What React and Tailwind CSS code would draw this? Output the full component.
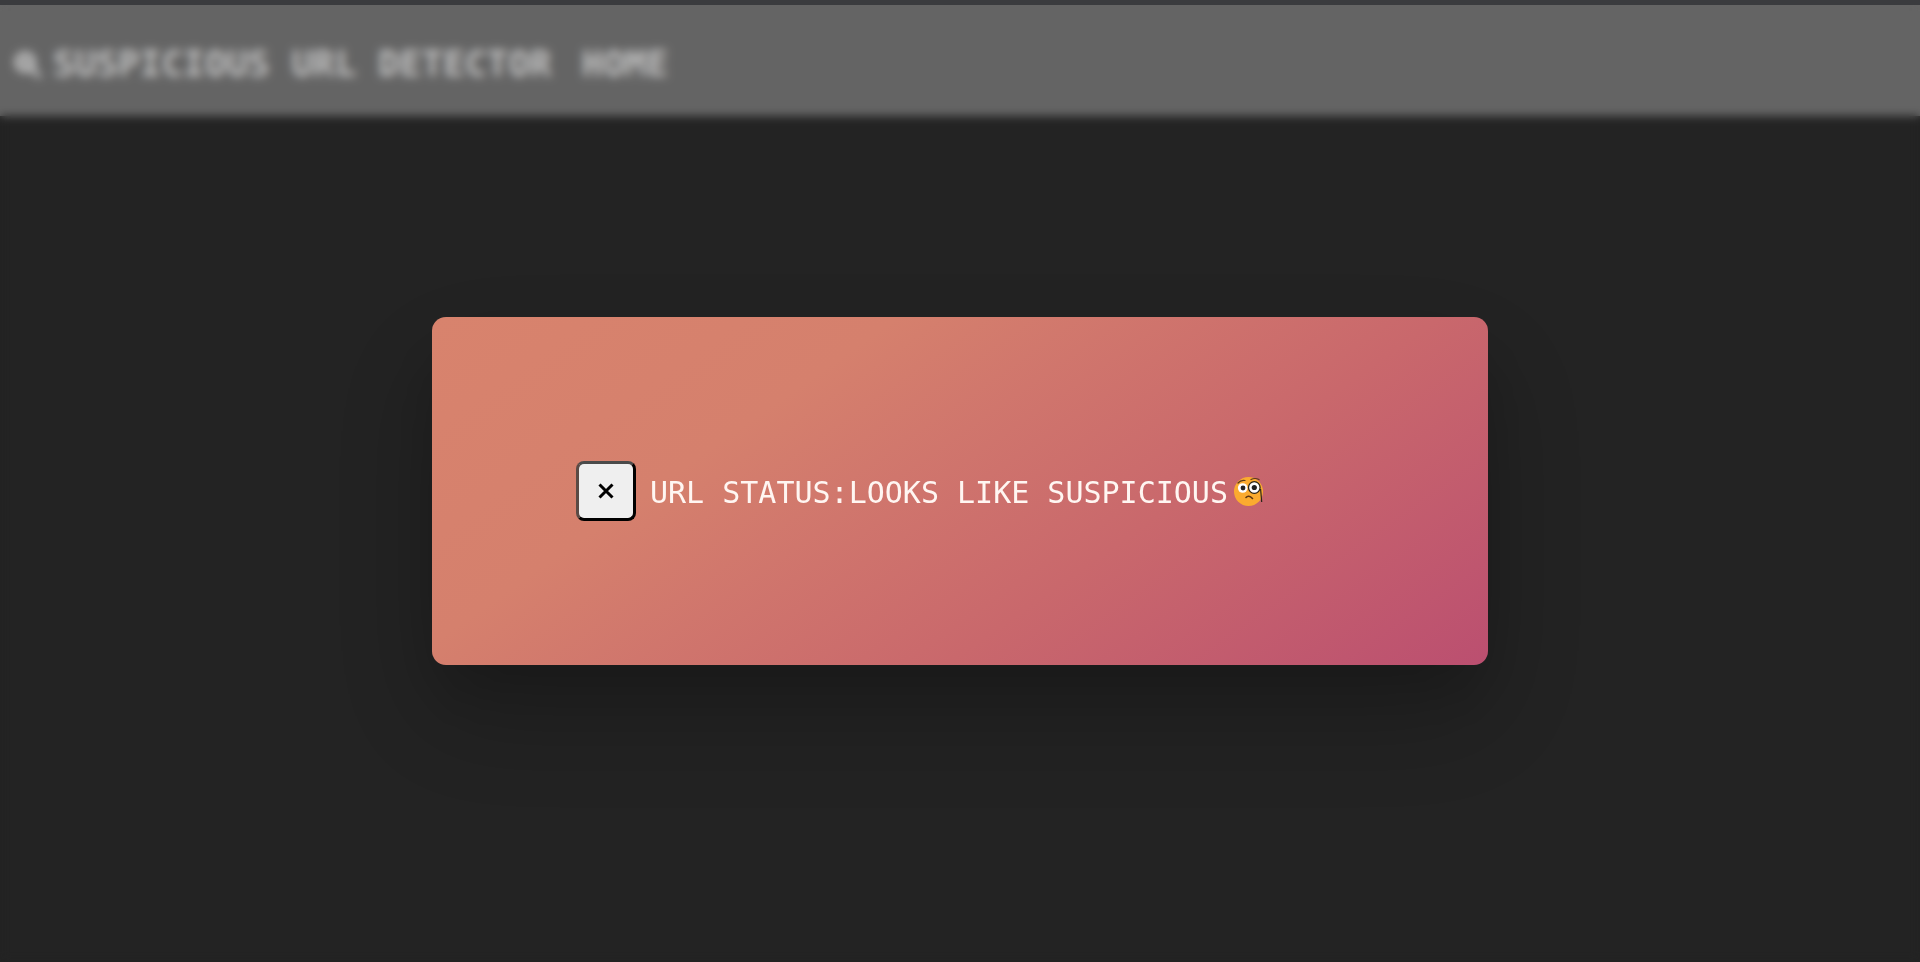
function MonocleFace() {
  return (
    <svg width="32" height="32" viewBox="0 0 32 32" className="mt-[2px] ml-[5px] shrink-0">
      <circle cx="15.5" cy="15.5" r="14.5" fill="#fbab2f" />
      <path d="M5 7 Q8 3.5 12 4.5" fill="none" stroke="#5b3a1a" strokeWidth="1.2" strokeLinecap="round" />
      <path d="M18 3.5 Q22 1.5 26 3.5" fill="none" stroke="#5b3a1a" strokeWidth="1.2" strokeLinecap="round" />
      <circle cx="9.7" cy="12" r="4.8" fill="#fff" />
      <circle cx="10" cy="12" r="2.4" fill="#222" />
      <circle cx="21.3" cy="11.5" r="5.8" fill="#fff" stroke="#2a2418" strokeWidth="1.3" />
      <circle cx="21.3" cy="11.5" r="2.6" fill="#222" />
      <path d="M27.6 13 L28.7 26" fill="none" stroke="#2a2418" strokeWidth="1.2" />
      <path d="M13 21.5 Q15.5 18.5 19.5 22.5" fill="none" stroke="#5b3410" strokeWidth="1.6" strokeLinecap="round" />
    </svg>
  )
}

export default function App() {
  return (
    <div className="relative h-[962px] overflow-hidden bg-[#2f2f2f] font-['DejaVu_Sans_Mono',monospace]">
      <nav className="flex h-[116px] items-center gap-[30px] bg-[#868686] pt-[11px] pl-[13px] text-[36px] leading-none font-bold text-white">
        <div className="flex items-center gap-[12px]">
          <svg width="28" height="28" viewBox="0 0 30 30" fill="none" stroke="white" strokeWidth="5">
            <circle cx="13" cy="13" r="9" fill="#c8c8c8" />
            <path d="M20 20 L28 28" strokeLinecap="round" />
          </svg>
          <span>SUSPICIOUS URL DETECTOR</span>
        </div>
        <a>HOME</a>
      </nav>

      {/* modal overlay */}
      <div className="absolute inset-0 flex flex-col bg-black/25 backdrop-blur-[5px]">
        <div className="h-[5px] bg-[#3a3b3e]" />
        <div className="flex flex-1 items-center justify-center pt-[14px]">
          <div className="flex h-[348px] w-[1056px] items-center rounded-[14px] bg-[linear-gradient(145deg,#d8836d_0%,#d5806d_30%,#c9686c_65%,#bb4f70_100%)] pl-[144px] text-white shadow-[0_50px_110px_10px_rgba(0,0,0,0.2),0_30px_60px_-10px_rgba(0,0,0,0.15)]">
            <button className="flex h-[60px] w-[60px] shrink-0 items-center justify-center rounded-[8px] border-[3px] border-t-[#4a4a4a] border-r-black border-b-black border-l-[#5a4a45] bg-[#efefef] text-black">
              <svg width="16" height="16" viewBox="0 0 16 16" stroke="black" strokeWidth="3">
                <path d="M1.5 1.5 L14.5 14.5 M14.5 1.5 L1.5 14.5" />
              </svg>
            </button>
            <p className="mt-[4px] ml-[14px] text-[30px] leading-none font-light text-[#fff6f2] whitespace-pre">URL STATUS:LOOKS LIKE SUSPICIOUS</p>
            <MonocleFace />
          </div>
        </div>
      </div>
    </div>
  )
}
